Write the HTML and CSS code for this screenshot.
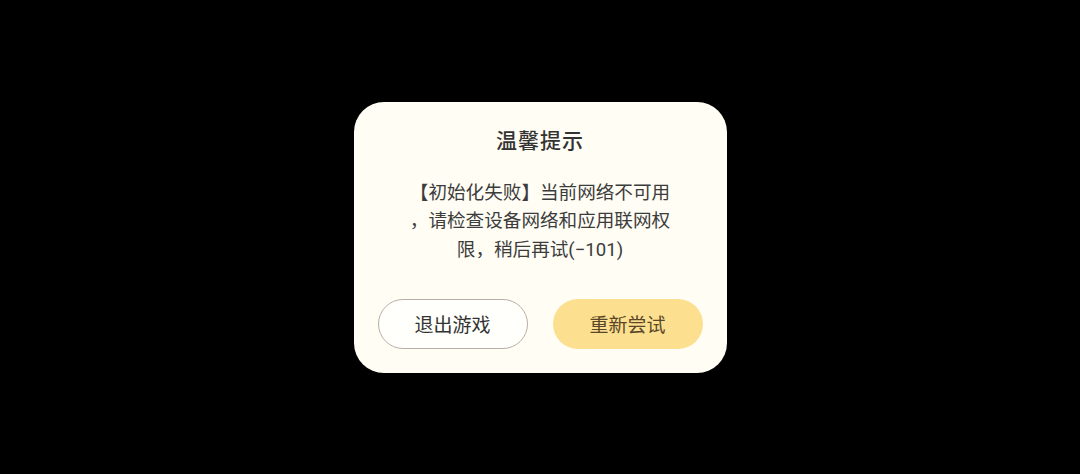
FILE: index.html
```html
<!DOCTYPE html>
<html lang="zh-CN">
<head>
    <meta charset="UTF-8">
    <title>温馨提示</title>
    <link rel="stylesheet" href="styles.css">
</head>
<body>
    <div class="mask">
        <div class="dialog">
            <p class="title">温馨提示</p>
            <p class="msg">【初始化失败】当前网络不可用<br>，请检查设备网络和应用联网权<br>限，稍后再试(−101)</p>
            <div class="btns">
                <a href="javascript:;" class="btn quit">退出游戏</a>
                <a href="javascript:;" class="btn retry">重新尝试</a>
            </div>
        </div>
    </div>
</body>
</html>
```

FILE: styles.css
```css
*{
    margin: 0;
    padding: 0;
}
html,body{
    height: 100%;
    background-color: #000;
    font-family: Roboto, "Noto Sans CJK SC", sans-serif;
}
.mask{
    height: 100%;
    display: flex;
    align-items: center;
    justify-content: center;
}
.dialog{
    width: 373px;
    height: 271px;
    box-sizing: border-box;
    padding: 25px 24px 24px;
    background-color: #fffdf4;
    border-radius: 30px;
    display: flex;
    flex-direction: column;
    align-items: center;
}
.title{
    font-size: 21px;
    line-height: 28px;
    font-weight: 500;
    letter-spacing: 1px;
    color: #333;
}
.msg{
    margin-top: 24px;
    font-size: 18.6px;
    line-height: 28.5px;
    color: #3c3c3c;
    text-align: center;
}
.btns{
    margin-top: auto;
    width: 100%;
    display: flex;
    justify-content: space-between;
}
.btn{
    width: 150px;
    height: 50px;
    box-sizing: border-box;
    border-radius: 25px;
    display: flex;
    align-items: center;
    justify-content: center;
    font-size: 19px;
    text-decoration: none;
}
.quit{
    border: 1px solid #b9aea4;
    background-color: #fffffb;
    color: #333;
}
.retry{
    background-color: #fde08f;
    color: #5a4628;
}
```
